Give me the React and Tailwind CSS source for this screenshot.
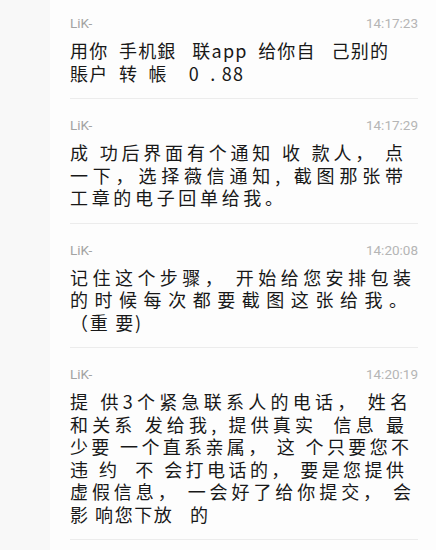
import { useLayoutEffect, useRef, useState } from 'react';

// each line: text as shown, t = width from the left edge to the end of the last glyph cell
const messages = [
  {
    name: 'LiK-',
    time: '14:17:23',
    lines: [
      { text: '用你  手机銀   联app  给你自   己别的', t: 318 },
      { text: '賬户  转  帳    0  . 88', t: 173 },
    ],
  },
  {
    name: 'LiK-',
    time: '14:17:29',
    lines: [
      { text: '成 功后界面有个通知 收 款人， 点', t: 333 },
      { text: '一下，选择薇信通知, 截图那张带', t: 333 },
      { text: '工章的电子回单给我。', t: 213 },
    ],
  },
  {
    name: 'LiK-',
    time: '14:20:08',
    lines: [
      { text: '记住这个步骤， 开始给您安排包装', t: 341 },
      { text: '的时候每次都要截图这张给我。', t: 337 },
      { text: '（重 要)', t: 71 },
    ],
  },
  {
    name: 'LiK-',
    time: '14:20:19',
    lines: [
      { text: '提 供3个紧急联系人的电话， 姓名', t: 338 },
      { text: '和关系 发给我, 提供真实  信息 最', t: 334 },
      { text: '少要 一个直系亲属， 这 个只要您不', t: 339 },
      { text: '违 约  不 会打电话的， 要是您提供', t: 334 },
      { text: '虚假信息， 一会好了给你提交， 会', t: 341 },
      { text: '影 响您下放   的', t: 138 },
    ],
  },
];

const FitLine = ({ text, target }) => {
  const ref = useRef(null);
  const [ls, setLs] = useState(null);

  useLayoutEffect(() => {
    const measure = () => {
      const el = ref.current;
      if (!el) return;
      const prev = el.style.letterSpacing;
      el.style.letterSpacing = '0px';
      const w0 = el.getBoundingClientRect().width;
      el.style.letterSpacing = prev;
      const n = [...text].length;
      setLs((target - w0) / (n - 1));
    };
    measure();
    if (document.fonts && document.fonts.ready) document.fonts.ready.then(measure);
  }, [text, target]);

  return (
    <div className="h-[22.5px]">
      <span
        ref={ref}
        className="inline-block align-top h-[22.5px] leading-[22.5px] whitespace-pre"
        style={ls === null ? undefined : { letterSpacing: `${ls}px` }}
      >
        {text}
      </span>
    </div>
  );
};

const MessageItem = ({ msg, first }) => (
  <div className={`border-b border-[#ececec] pb-[14px] ${first ? 'pt-[14px]' : 'pt-[17px]'}`}>
    <div className="flex justify-between items-center h-[18px] font-['Roboto',sans-serif] text-[13.5px] leading-[18px]">
      <span className="text-[#a3a3a3]">{msg.name}</span>
      <span className="text-[#b5b5b5]">{msg.time}</span>
    </div>
    <div className="mt-[7px] font-['Noto_Sans_CJK_SC',sans-serif] text-[18px] leading-[22.5px] text-[#181818]">
      {msg.lines.map((line, i) => (
        <FitLine key={i} text={line.text} target={line.t} />
      ))}
    </div>
  </div>
);

export default function App() {
  return (
    <div className="w-[436px] h-[550px] overflow-hidden bg-[#f8f8f8]">
      <div className="ml-[50px] h-full bg-[#fdfdfd] pl-[20px] pr-[18px]">
        {messages.map((msg, i) => (
          <MessageItem key={i} msg={msg} first={i === 0} />
        ))}
      </div>
    </div>
  );
}
